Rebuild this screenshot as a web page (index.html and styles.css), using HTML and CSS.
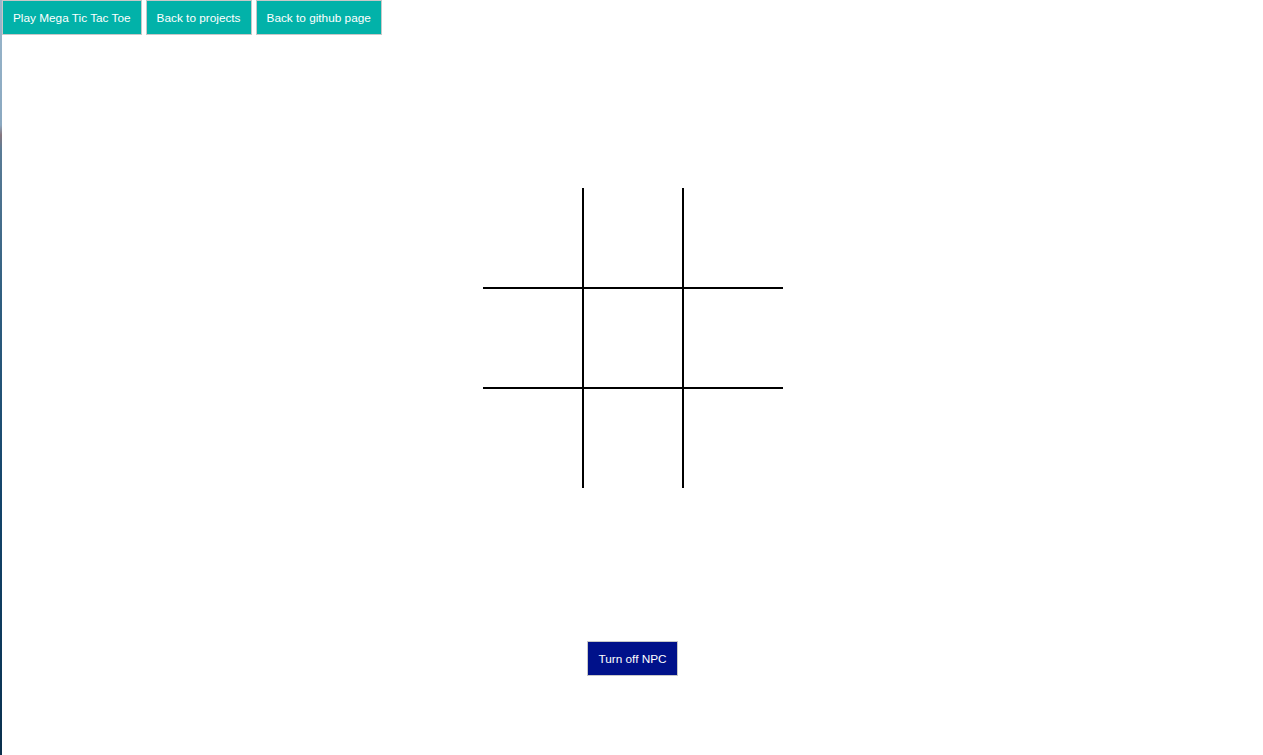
FILE: index.html
```html
<!DOCTYPE html>
<html>
<head>
<meta charset="utf-8">
<link rel="stylesheet" href="styles.css">
<title>Tic Tac Toe</title>
</head>
<body>
<div class="window">
  <div class="edge"></div>
  <main class="page">
    <nav class="nav">
      <button class="btn btn-teal">Play Mega Tic Tac Toe</button>
      <button class="btn btn-teal">Back to projects</button>
      <button class="btn btn-teal">Back to github page</button>
    </nav>
    <div class="board">
      <div class="cell c0"></div>
      <div class="cell c1"></div>
      <div class="cell c2"></div>
      <div class="cell c3"></div>
      <div class="cell c4"></div>
      <div class="cell c5"></div>
      <div class="cell c6"></div>
      <div class="cell c7"></div>
      <div class="cell c8"></div>
    </div>
    <div class="footer">
      <button class="btn btn-navy">Turn off NPC</button>
    </div>
  </main>
</div>
</body>
</html>
```
FILE: styles.css
```css
html, body {
  margin: 0;
  padding: 0;
  height: 100%;
  background: #ffffff;
}
.window {
  display: flex;
  height: 755px;
  overflow: hidden;
}
.edge {
  width: 2px;
  flex: none;
  background: linear-gradient(to bottom, #9ab7cc 0px, #8aa8c0 125px, #86767e 135px, #5a7c96 150px, #2f5e80 300px, #13446a 500px, #0b3556 700px, #0a2f4c 755px);
}
.page {
  flex: 1;
  display: flex;
  flex-direction: column;
  font-family: "Liberation Sans", Arial, sans-serif;
}
.nav {
  display: flex;
  gap: 4px;
}
.btn {
  font-family: "Liberation Sans", Arial, sans-serif;
  font-size: 11.8px;
  color: #ffffff;
  height: 35px;
  padding: 0 10px;
  border: 1px solid #c8c8c8;
  margin: 0;
  cursor: pointer;
}
.btn-teal {
  background: #02b2a9;
}
.btn-navy {
  background: #00118a;
}
.board {
  margin: 153px auto 0;
  width: 300px;
  height: 300px;
  display: grid;
  grid-template-columns: repeat(3, 100px);
  grid-template-rows: repeat(3, 100px);
}
.cell {
  box-sizing: border-box;
  border: 1px solid #000000;
}
.c0, .c1, .c2 { border-top: none; }
.c6, .c7, .c8 { border-bottom: none; }
.c0, .c3, .c6 { border-left: none; }
.c2, .c5, .c8 { border-right: none; }
.footer {
  margin-top: 153px;
  display: flex;
  justify-content: center;
}
```
